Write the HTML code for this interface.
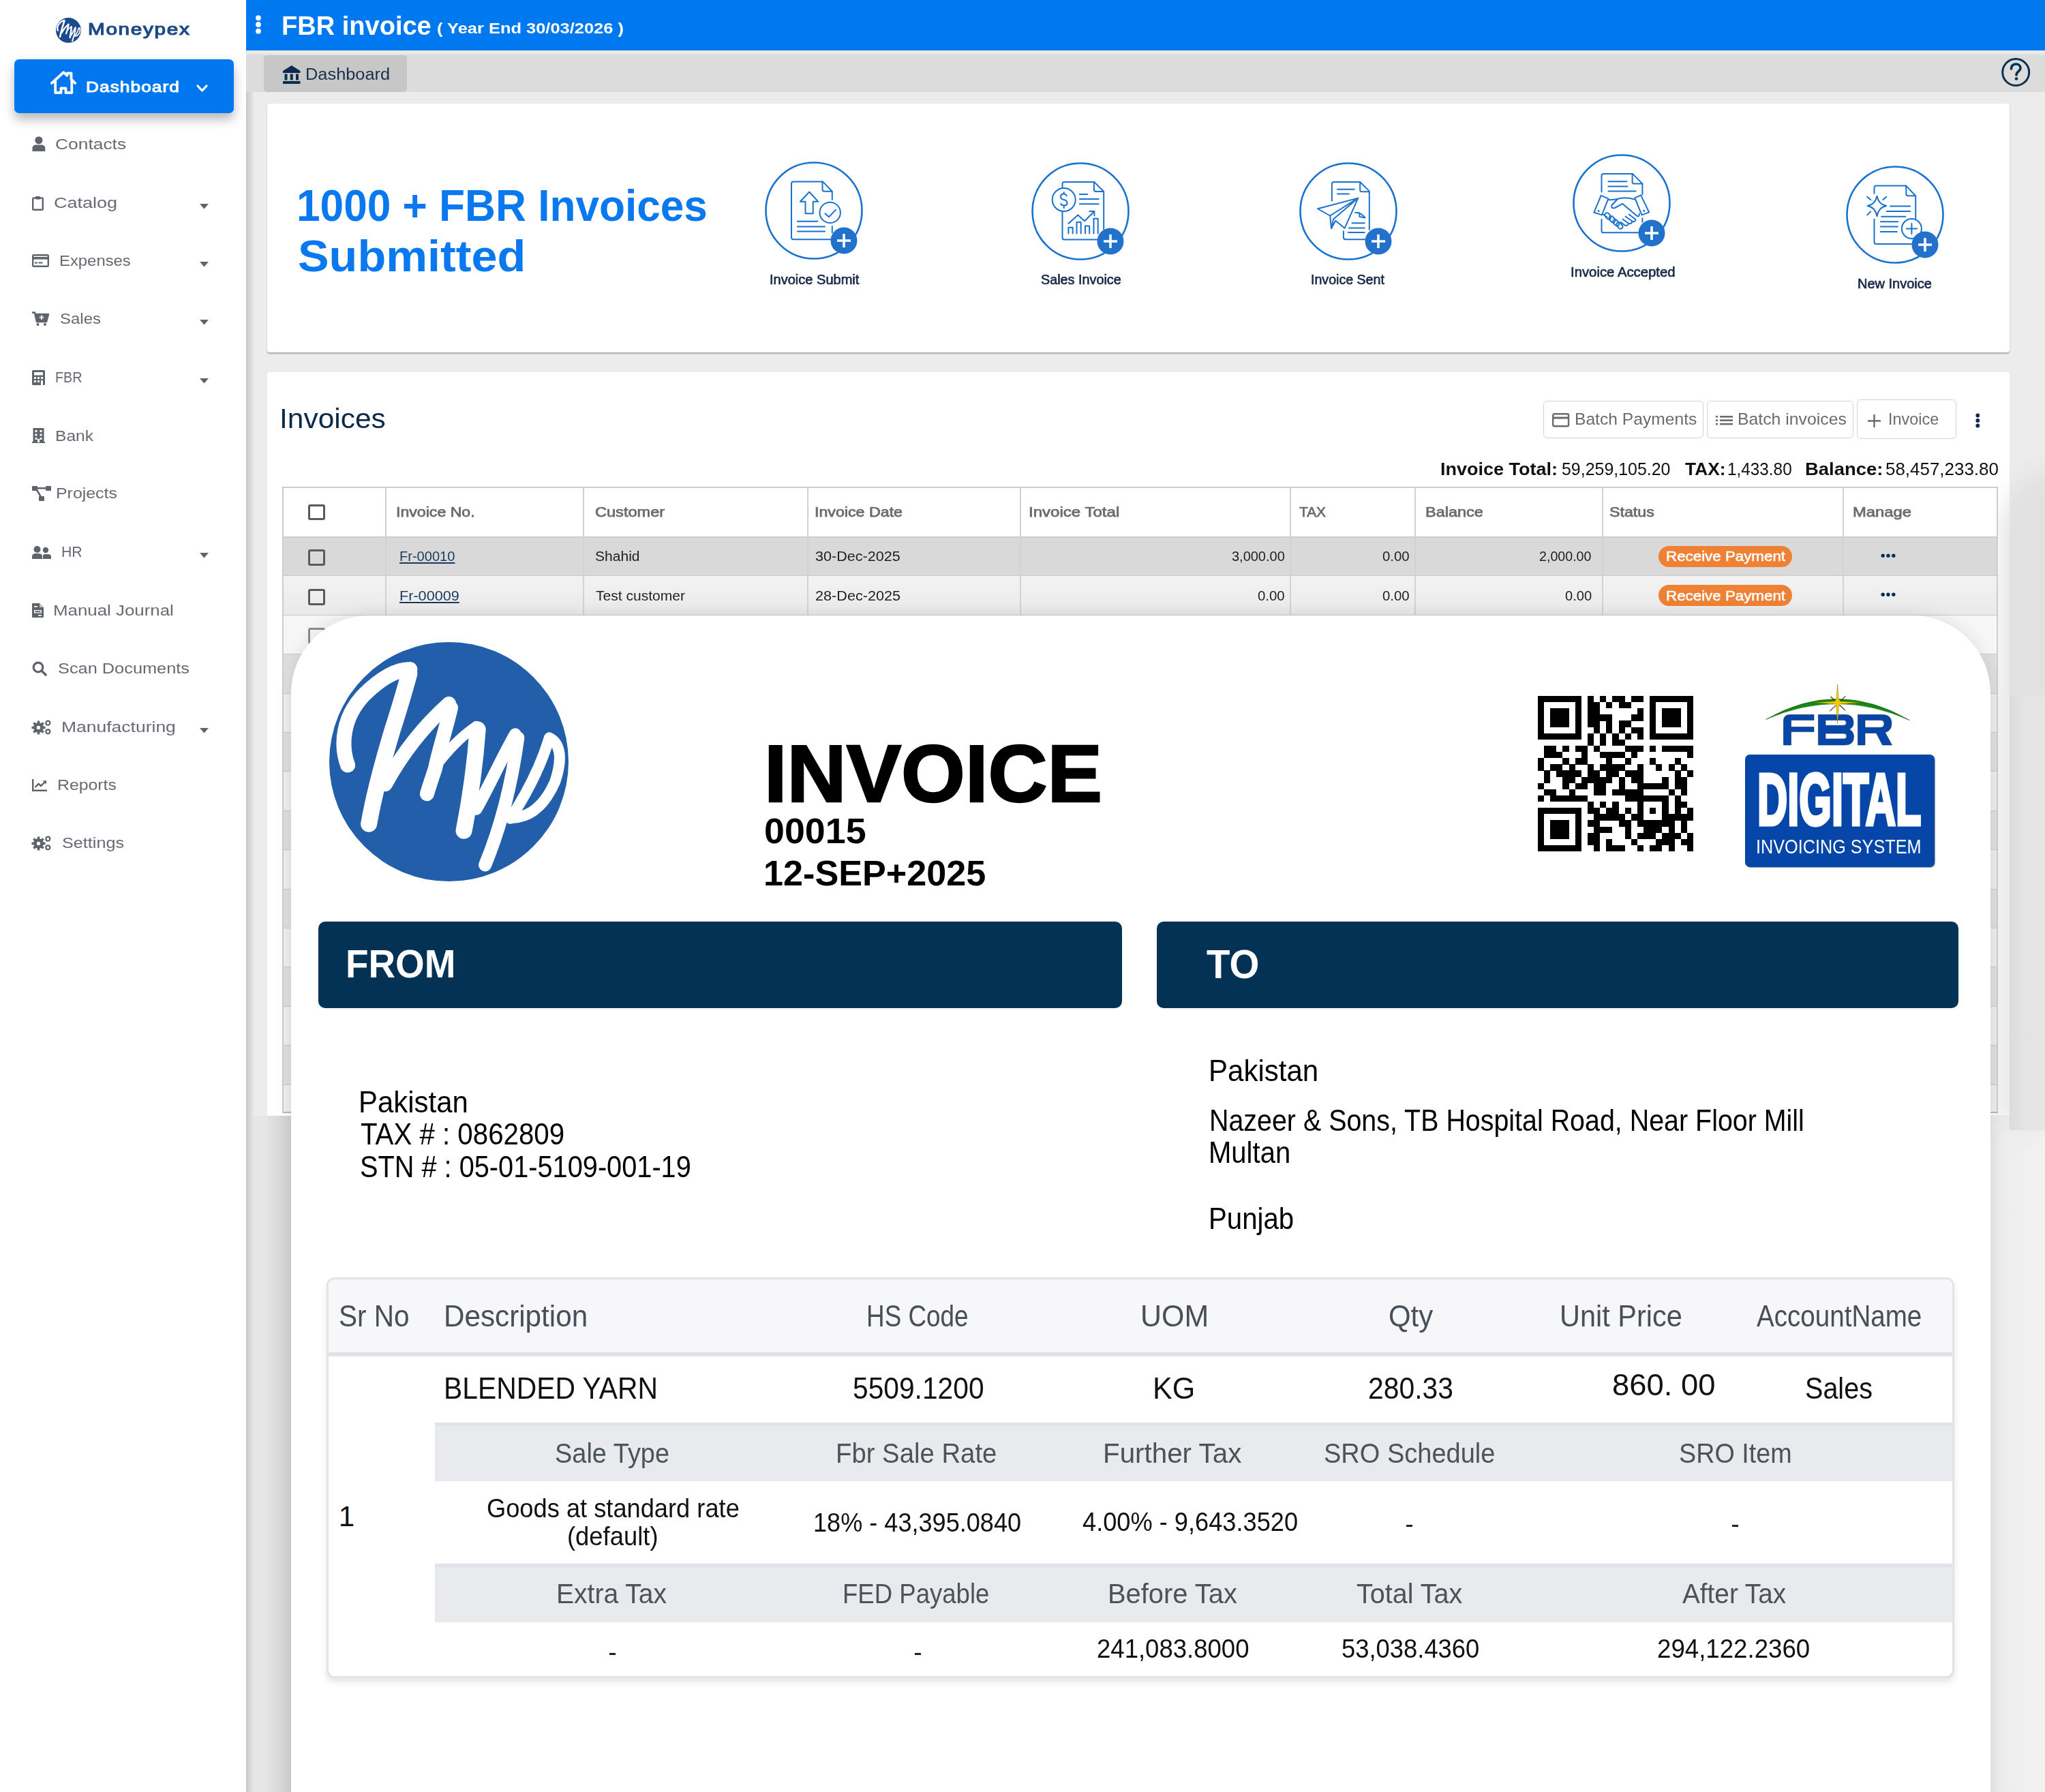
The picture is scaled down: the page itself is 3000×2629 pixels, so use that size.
<!DOCTYPE html><html><head><meta charset="utf-8"><style>
html,body{margin:0;padding:0;}
body{width:3000px;height:2629px;position:relative;overflow:hidden;background:#ececec;font-family:"Liberation Sans",sans-serif;}
.t{position:absolute;white-space:nowrap;transform-origin:0 0;}
.r{position:absolute;box-sizing:border-box;}
svg{position:absolute;overflow:visible;}
</style></head><body>
<div class="r" style="left:0px;top:0px;width:361px;height:2629px;background:#fff;"></div><div class="r" style="left:361px;top:0px;width:11px;height:2629px;background:linear-gradient(90deg,#c9c9c9,#e6e6e6);"></div><div class="r" style="left:361px;top:0px;width:2639px;height:74px;background:#0078ef;"></div><div class="r" style="left:361px;top:74px;width:2639px;height:6px;background:#e9e9e9;"></div><div class="r" style="left:361px;top:80px;width:2639px;height:55px;background:#dcdcdc;"></div><div class="r" style="left:387px;top:81px;width:210px;height:53.5px;background:#c7c7c7;border-radius:5px;"></div><div class="r" style="left:2938px;top:700px;width:102px;height:950px;background:#e1e1e1;border-radius:80px 0 0 0;filter:blur(18px);"></div><div class="r" style="left:2948px;top:1020px;width:52px;height:638px;background:linear-gradient(90deg,#dbdbdb,#e3e3e3 40%,#e6e6e6);"></div><div class="r" style="left:392px;top:152px;width:2556px;height:365px;background:#fff;border-radius:4px;box-shadow:0 1.5px 2px rgba(0,0,0,0.28);"></div><div class="r" style="left:392px;top:546px;width:2556px;height:1091px;background:#fff;border-radius:4px 4px 0 0;"></div><div class="r" style="left:2920px;top:1636px;width:80px;height:993px;background:linear-gradient(90deg,#ececec,#f2f2f2);"></div><div class="r" style="left:372px;top:1637px;width:55px;height:992px;background:linear-gradient(90deg,#e6e6e6 0%,#e6e6e6 36%,#e2e2e2 40%,#d2d2d2 100%);"></div><svg style="left:82.0px;top:26.0px" width="36.8" height="36.8" viewBox="0 0 350 350"><circle cx="175" cy="175" r="175" fill="#1c4a8f"/><path d="M27 180 C16 150 20 110 50 78 C70 58 95 40 118 40" stroke="#fff" fill="none" stroke-linecap="round" stroke-linejoin="round" stroke-width="22"/><path d="M117 46 C108 80 100 105 92 130 C80 170 66 220 58 266" stroke="#fff" fill="none" stroke-linecap="round" stroke-linejoin="round" stroke-width="24"/><path d="M82 208 C100 175 130 130 175 90" stroke="#fff" fill="none" stroke-linecap="round" stroke-linejoin="round" stroke-width="21"/><path d="M178 96 C170 130 160 160 155 185 C150 200 146 212 143 222" stroke="#fff" fill="none" stroke-linecap="round" stroke-linejoin="round" stroke-width="21"/><path d="M155 183 C172 160 190 140 215 123" stroke="#fff" fill="none" stroke-linecap="round" stroke-linejoin="round" stroke-width="15"/><path d="M217 128 C214 170 208 220 197 276" stroke="#fff" fill="none" stroke-linecap="round" stroke-linejoin="round" stroke-width="24"/><path d="M215 244 C232 215 252 170 272 135" stroke="#fff" fill="none" stroke-linecap="round" stroke-linejoin="round" stroke-width="18"/><path d="M276 140 C268 200 255 260 228 326" stroke="#fff" fill="none" stroke-linecap="round" stroke-linejoin="round" stroke-width="19"/><path d="M265 258 C290 220 310 180 322 140 C338 148 342 170 330 205 C318 232 300 255 270 257" stroke="#fff" fill="none" stroke-linecap="round" stroke-linejoin="round" stroke-width="16"/></svg><div class="t " style="left:129.1px;top:30.9px;font-size:24.71px;line-height:24.71px;font-weight:400;color:#1f4a88;transform:scaleX(1.2000);-webkit-text-stroke:1.2px #1f4a88;letter-spacing:1.42px;">Moneypex</div><div class="r" style="left:20.6px;top:86.6px;width:322.4px;height:79.0px;background:#0077ee;border-radius:7px;box-shadow:0 9px 16px rgba(0,0,0,0.28);"></div><svg style="left:74px;top:104px;" width="38" height="34" viewBox="0 0 38 34" preserveAspectRatio="none"><path d="M1.8 18 L19.3 2.2 L24.5 6.8 V3.5 H30.5 V12.3 L36.3 18 M7.2 13 V32 H15.5 V25.5 H22.5 V32 H31.3 V13" stroke="#fff" stroke-width="3.8" fill="none" stroke-linejoin="round" stroke-linecap="round"/></svg><div class="t " style="left:125.8px;top:117.0px;font-size:22.24px;line-height:22.24px;font-weight:400;color:#fff;transform:scaleX(1.1800);-webkit-text-stroke:1px #fff;letter-spacing:0.90px;">Dashboard</div><svg style="left:288px;top:124px;" width="17" height="11" viewBox="0 0 17 11" preserveAspectRatio="none"><path d="M2 2 L8.5 9 L15 2" stroke="#fff" stroke-width="3.2" fill="none" stroke-linecap="round" stroke-linejoin="round"/></svg><div class="t " style="left:81.3px;top:200.8px;font-size:22.24px;line-height:22.24px;font-weight:400;color:#656a73;transform:scaleX(1.1862);">Contacts</div><div class="t " style="left:78.6px;top:287.2px;font-size:22.24px;line-height:22.24px;font-weight:400;color:#656a73;transform:scaleX(1.2146);">Catalog</div><svg style="left:293px;top:298.5px;" width="13" height="7.5" viewBox="0 0 13 7.5" preserveAspectRatio="none"><path d="M0 0H13L6.5 7.5Z" fill="#5f636b"/></svg><div class="t " style="left:87.0px;top:372.2px;font-size:22.24px;line-height:22.24px;font-weight:400;color:#656a73;transform:scaleX(1.0731);">Expenses</div><svg style="left:293px;top:383.5px;" width="13" height="7.5" viewBox="0 0 13 7.5" preserveAspectRatio="none"><path d="M0 0H13L6.5 7.5Z" fill="#5f636b"/></svg><div class="t " style="left:87.9px;top:457.2px;font-size:22.24px;line-height:22.24px;font-weight:400;color:#656a73;transform:scaleX(1.0777);">Sales</div><svg style="left:293px;top:468.5px;" width="13" height="7.5" viewBox="0 0 13 7.5" preserveAspectRatio="none"><path d="M0 0H13L6.5 7.5Z" fill="#5f636b"/></svg><div class="t " style="left:81.4px;top:543.2px;font-size:22.24px;line-height:22.24px;font-weight:400;color:#656a73;transform:scaleX(0.8888);">FBR</div><svg style="left:293px;top:554.5px;" width="13" height="7.5" viewBox="0 0 13 7.5" preserveAspectRatio="none"><path d="M0 0H13L6.5 7.5Z" fill="#5f636b"/></svg><div class="t " style="left:81.0px;top:629.2px;font-size:22.24px;line-height:22.24px;font-weight:400;color:#656a73;transform:scaleX(1.1047);">Bank</div><div class="t " style="left:82.0px;top:713.2px;font-size:22.24px;line-height:22.24px;font-weight:400;color:#656a73;transform:scaleX(1.1197);">Projects</div><div class="t " style="left:90.3px;top:799.2px;font-size:22.24px;line-height:22.24px;font-weight:400;color:#656a73;transform:scaleX(0.9567);">HR</div><svg style="left:293px;top:810.5px;" width="13" height="7.5" viewBox="0 0 13 7.5" preserveAspectRatio="none"><path d="M0 0H13L6.5 7.5Z" fill="#5f636b"/></svg><div class="t " style="left:77.9px;top:885.2px;font-size:22.24px;line-height:22.24px;font-weight:400;color:#656a73;transform:scaleX(1.1630);">Manual Journal</div><div class="t " style="left:84.9px;top:970.2px;font-size:22.24px;line-height:22.24px;font-weight:400;color:#656a73;transform:scaleX(1.1400);">Scan Documents</div><div class="t " style="left:89.8px;top:1056.2px;font-size:22.24px;line-height:22.24px;font-weight:400;color:#656a73;transform:scaleX(1.1912);">Manufacturing</div><svg style="left:293px;top:1067.5px;" width="13" height="7.5" viewBox="0 0 13 7.5" preserveAspectRatio="none"><path d="M0 0H13L6.5 7.5Z" fill="#5f636b"/></svg><div class="t " style="left:84.0px;top:1141.2px;font-size:22.24px;line-height:22.24px;font-weight:400;color:#656a73;transform:scaleX(1.1165);">Reports</div><div class="t " style="left:90.9px;top:1226.2px;font-size:22.24px;line-height:22.24px;font-weight:400;color:#656a73;transform:scaleX(1.1331);">Settings</div><svg style="left:46.6px;top:200px;" width="19.800000000000004" height="22" viewBox="0 0 19.800000000000004 22" preserveAspectRatio="none"><circle cx="9.9" cy="5.8" r="5.6" fill="#5f636b"/><path d="M0.5 22 V17.5 C0.5 14 3 12.5 6 12.5 H13.8 C16.8 12.5 19.3 14 19.3 17.5 V22 Z" fill="#5f636b"/></svg><svg style="left:47px;top:287px;" width="17" height="22" viewBox="0 0 17 22" preserveAspectRatio="none"><rect x="1.2" y="3.5" width="14.6" height="17.3" rx="1.5" stroke="#5f636b" stroke-width="2.4" fill="none"/><rect x="5" y="1" width="7" height="4.5" rx="1" fill="#5f636b"/></svg><svg style="left:47px;top:373px;" width="25" height="19" viewBox="0 0 25 19" preserveAspectRatio="none"><rect x="1.2" y="1.2" width="22.6" height="16.6" rx="1.5" stroke="#5f636b" stroke-width="2.4" fill="none"/><rect x="1" y="4" width="23" height="3.5" fill="#5f636b"/><rect x="4" y="11.5" width="4" height="2" fill="#5f636b"/><rect x="9.5" y="11.5" width="6" height="2" fill="#5f636b"/></svg><svg style="left:47px;top:457px;" width="25" height="21" viewBox="0 0 25 21" preserveAspectRatio="none"><path d="M0 1.5 H4 L7 15 H21 L24 4 H5" stroke="#5f636b" stroke-width="2.6" fill="#5f636b" stroke-linejoin="round"/><circle cx="8.5" cy="19" r="2" fill="#5f636b"/><circle cx="19" cy="19" r="2" fill="#5f636b"/><path d="M14 5.5 V12 M10.8 8.7 H17.2" stroke="#fff" stroke-width="1.8"/></svg><svg style="left:47px;top:543px;" width="19" height="22" viewBox="0 0 19 22" preserveAspectRatio="none"><rect x="0" y="0" width="19" height="22" rx="1.5" fill="#5f636b"/><rect x="3" y="3" width="13" height="4.5" fill="#fff"/><g fill="#fff"><rect x="3" y="10" width="3" height="3"/><rect x="8" y="10" width="3" height="3"/><rect x="13" y="10" width="3" height="3"/><rect x="3" y="15" width="3" height="3"/><rect x="8" y="15" width="3" height="3"/><rect x="13" y="15" width="3" height="8"/></g></svg><svg style="left:47px;top:628px;" width="19" height="22" viewBox="0 0 19 22" preserveAspectRatio="none"><rect x="1.5" y="0" width="16" height="21" fill="#5f636b"/><rect x="0" y="20" width="19" height="2" fill="#5f636b"/><g fill="#fff"><rect x="4.5" y="3" width="3" height="3"/><rect x="11.5" y="3" width="3" height="3"/><rect x="4.5" y="8.5" width="3" height="3"/><rect x="11.5" y="8.5" width="3" height="3"/><rect x="4.5" y="14" width="3" height="3"/><rect x="11.5" y="14" width="3" height="3"/><rect x="8" y="16" width="3" height="5"/></g></svg><svg style="left:47px;top:713px;" width="28" height="22" viewBox="0 0 28 22" preserveAspectRatio="none"><g fill="#5f636b"><rect x="0" y="0" width="8" height="7" rx="1"/><rect x="20" y="0" width="8" height="7" rx="1"/><rect x="10" y="15" width="8" height="7" rx="1"/><rect x="6" y="2" width="15" height="2.5"/></g><path d="M6 4 L13 16" stroke="#5f636b" stroke-width="2.5"/></svg><svg style="left:47px;top:801px;" width="28" height="19" viewBox="0 0 28 19" preserveAspectRatio="none"><g fill="#5f636b"><circle cx="7.5" cy="5" r="5"/><circle cx="20" cy="6" r="4.2"/><path d="M0 19 V15.5 C0 12.5 2.5 11 5 11 H10 C13 11 15 12.5 15 15.5 V19Z"/><path d="M16 19 V15 C16 13 17 12 19 12 H23.5 C26.5 12 28 13.5 28 16 V19Z"/></g></svg><svg style="left:47px;top:885px;" width="17" height="21" viewBox="0 0 17 21" preserveAspectRatio="none"><path d="M0 1 C0 0.4 0.4 0 1 0 H11 L17 6 V20 C17 20.6 16.6 21 16 21 H1 C0.4 21 0 20.6 0 20Z" fill="#5f636b"/><path d="M11 0 V6 H17" fill="#fff" opacity="0.6"/><rect x="3" y="10" width="11" height="4.5" fill="#fff"/><rect x="4.5" y="11.2" width="8" height="2.1" fill="#5f636b"/><rect x="3" y="4" width="5" height="1.6" fill="#fff"/><rect x="9" y="17" width="5" height="1.6" fill="#fff"/></svg><svg style="left:47px;top:970px;" width="22" height="21" viewBox="0 0 22 21" preserveAspectRatio="none"><circle cx="9" cy="9" r="6.8" stroke="#5f636b" stroke-width="3.2" fill="none"/><path d="M14 14 L20 20" stroke="#5f636b" stroke-width="3.6" stroke-linecap="round"/></svg><svg style="left:47px;top:1056px;" width="28" height="22" viewBox="0 0 28 22" preserveAspectRatio="none"><g fill="#5f636b"><circle cx="9.5" cy="11.5" r="7.3"/><rect x="7.7" y="1.5" width="3.6" height="4" transform="rotate(0 9.5 11.5)"/><rect x="7.7" y="1.5" width="3.6" height="4" transform="rotate(45 9.5 11.5)"/><rect x="7.7" y="1.5" width="3.6" height="4" transform="rotate(90 9.5 11.5)"/><rect x="7.7" y="1.5" width="3.6" height="4" transform="rotate(135 9.5 11.5)"/><rect x="7.7" y="1.5" width="3.6" height="4" transform="rotate(180 9.5 11.5)"/><rect x="7.7" y="1.5" width="3.6" height="4" transform="rotate(225 9.5 11.5)"/><rect x="7.7" y="1.5" width="3.6" height="4" transform="rotate(270 9.5 11.5)"/><rect x="7.7" y="1.5" width="3.6" height="4" transform="rotate(315 9.5 11.5)"/></g><circle cx="9.5" cy="11.5" r="2.7" fill="#fff"/><circle cx="23.3" cy="4.7" r="3" stroke="#5f636b" stroke-width="2.2" fill="none"/><circle cx="23.3" cy="17.3" r="3" stroke="#5f636b" stroke-width="2.2" fill="none"/></svg><svg style="left:47px;top:1143px;" width="22" height="18" viewBox="0 0 22 18" preserveAspectRatio="none"><path d="M1.2 0 V16.8 H22" stroke="#5f636b" stroke-width="2.4" fill="none"/><path d="M4.5 12 L9.5 7 L13 10 L19.5 3.5" stroke="#5f636b" stroke-width="2.4" fill="none"/><path d="M15.5 2.2 H21 V7.7Z" fill="#5f636b"/></svg><svg style="left:47px;top:1226px;" width="28" height="22" viewBox="0 0 28 22" preserveAspectRatio="none"><g fill="#5f636b"><circle cx="9.5" cy="11.5" r="7.3"/><rect x="7.7" y="1.5" width="3.6" height="4" transform="rotate(0 9.5 11.5)"/><rect x="7.7" y="1.5" width="3.6" height="4" transform="rotate(45 9.5 11.5)"/><rect x="7.7" y="1.5" width="3.6" height="4" transform="rotate(90 9.5 11.5)"/><rect x="7.7" y="1.5" width="3.6" height="4" transform="rotate(135 9.5 11.5)"/><rect x="7.7" y="1.5" width="3.6" height="4" transform="rotate(180 9.5 11.5)"/><rect x="7.7" y="1.5" width="3.6" height="4" transform="rotate(225 9.5 11.5)"/><rect x="7.7" y="1.5" width="3.6" height="4" transform="rotate(270 9.5 11.5)"/><rect x="7.7" y="1.5" width="3.6" height="4" transform="rotate(315 9.5 11.5)"/></g><circle cx="9.5" cy="11.5" r="2.7" fill="#fff"/><circle cx="23.3" cy="4.7" r="3" stroke="#5f636b" stroke-width="2.2" fill="none"/><circle cx="23.3" cy="17.3" r="3" stroke="#5f636b" stroke-width="2.2" fill="none"/></svg><svg style="left:374px;top:22px;" width="10" height="28" viewBox="0 0 10 28" preserveAspectRatio="none"><circle cx="5" cy="4.3" r="3.9" fill="#fff"/><circle cx="5" cy="14" r="3.9" fill="#fff"/><circle cx="5" cy="23.7" r="3.9" fill="#fff"/></svg><div class="t " style="left:412.5px;top:17.8px;font-size:39.24px;line-height:39.24px;font-weight:700;color:#fff;transform:scaleX(0.9693);">FBR invoice</div><div class="t " style="left:640.7px;top:31.0px;font-size:21.80px;line-height:21.80px;font-weight:700;color:#fff;transform:scaleX(1.1675);">( Year End 30/03/2026 )</div><svg style="left:414.5px;top:96px;" width="25.5" height="27" viewBox="0 0 25.5 27" preserveAspectRatio="none"><g fill="#0d2b4e"><path d="M0 8 L12.75 0 L25.5 8Z"/><rect x="0" y="8" width="25.5" height="3"/><rect x="2.5" y="12.5" width="4" height="9"/><rect x="10.75" y="12.5" width="4" height="9"/><rect x="19" y="12.5" width="4" height="9"/><rect x="0" y="23" width="25.5" height="4"/></g></svg><div class="t " style="left:448.4px;top:96.7px;font-size:23.98px;line-height:23.98px;font-weight:400;color:#1b2e4a;transform:scaleX(1.0587);">Dashboard</div><svg style="left:2935.6px;top:85px;" width="42.40000000000009" height="42" viewBox="0 0 42.40000000000009 42" preserveAspectRatio="none"><circle cx="21.2" cy="21" r="19.5" stroke="#08304f" stroke-width="3" fill="none"/><path d="M14.5 16 C14.5 11 18 9 21.5 9 C25.5 9 28 11.5 28 15 C28 19.5 22 20 22 25" stroke="#08304f" stroke-width="3.6" fill="none" stroke-linecap="round"/><circle cx="22" cy="30.5" r="2.3" fill="#08304f"/></svg><div class="r" style="left:2938px;top:700px;width:102px;height:950px;background:#e1e1e1;border-radius:80px 0 0 0;filter:blur(18px);"></div><div class="r" style="left:2948px;top:1020px;width:52px;height:638px;background:linear-gradient(90deg,#dbdbdb,#e3e3e3 40%,#e6e6e6);"></div><div class="t " style="left:435.1px;top:270.9px;font-size:63.95px;line-height:63.95px;font-weight:700;color:#0a78ef;transform:scaleX(0.9722);">1000 + FBR Invoices</div><div class="t " style="left:437.0px;top:344.5px;font-size:63.95px;line-height:63.95px;font-weight:700;color:#0a78ef;transform:scaleX(1.0698);">Submitted</div><svg style="left:1093.9px;top:209.10000000000002px" width="200" height="200" viewBox="-100 -100 200 200"><circle cx="0" cy="0" r="70.5" stroke="#1a72d0" stroke-width="2.6" fill="none"/><path d="M26.8 -16.3 V-28.3 L12.9 -42.6 H-30 Q-33 -42.6 -33 -39.6 V39.2 Q-33 42.2 -30 42.2 H25" stroke="#1a72d0" stroke-width="2" fill="none" stroke-linecap="round" stroke-linejoin="round"/><path d="M12.5 -42.6 V-31.3 Q12.5 -28.3 15.5 -28.3 H26" stroke="#1a72d0" stroke-width="2" fill="none" stroke-linecap="round" stroke-linejoin="round"/><path d="M26.8 23 V32.4" stroke="#1a72d0" stroke-width="2" fill="none" stroke-linecap="round" stroke-linejoin="round"/><path d="M-6.7 -27.5 L-20.1 -13.2 H-12.5 V4.2 H-1.3 V-13.2 H6.25 Z" stroke="#1a72d0" stroke-width="2" fill="none" stroke-linecap="round" stroke-linejoin="round"/><circle cx="23.7" cy="2.9" r="15.2" stroke="#1a72d0" stroke-width="2" fill="none" stroke-linecap="round" stroke-linejoin="round"/><path d="M16.5 4.2 L21.9 9.2 L32.1 -1.1" stroke="#1a72d0" stroke-width="2" fill="none" stroke-linecap="round" stroke-linejoin="round" stroke-width="2.8"/><path d="M-24.1 15.8 H5.4 M-24.1 23.4 H16.1 M-24.1 30.6 H16.1" stroke="#1a72d0" stroke-width="2" fill="none" stroke-linecap="round" stroke-linejoin="round"/><circle cx="44" cy="44" r="19.5" fill="#2272cc"/><path d="M34 44 H54 M44 34 V54" stroke="#fff" stroke-width="3.6"/></svg><svg style="left:1485.1px;top:209.8px" width="200" height="200" viewBox="-100 -100 200 200"><circle cx="0" cy="0" r="70.5" stroke="#1a72d0" stroke-width="2.6" fill="none"/><path d="M-26.5 -33.9 V-39.9 Q-26.5 -42.9 -23.5 -42.9 H20.4 L34.2 -29 V26.3 M-26.5 0 V38.5 Q-26.5 41.5 -23.5 41.5 H25.3" stroke="#1a72d0" stroke-width="2" fill="none" stroke-linecap="round" stroke-linejoin="round"/><path d="M19.9 -42.9 V-32 Q19.9 -29 22.9 -29 H33" stroke="#1a72d0" stroke-width="2" fill="none" stroke-linecap="round" stroke-linejoin="round"/><circle cx="-24.3" cy="-17" r="17" stroke="#1a72d0" stroke-width="2" fill="none" stroke-linecap="round" stroke-linejoin="round"/><path d="M-20.2 -22.6 Q-21.5 -25.5 -24.5 -25.5 Q-29 -25.5 -29 -21.5 Q-29 -18 -24.3 -17 Q-19.5 -16 -19.5 -12 Q-19.5 -8.5 -24 -8.5 Q-27.5 -8.5 -28.6 -11.2 M-24.3 -28.1 V-25.5 M-24.3 -8.5 V-5" stroke="#1a72d0" stroke-width="2" fill="none" stroke-linecap="round" stroke-linejoin="round"/><path d="M-1.1 -25 H10.1 M-1.1 -17.9 H26.6 M-1.1 -10.7 H26.6" stroke="#1a72d0" stroke-width="2" fill="none" stroke-linecap="round" stroke-linejoin="round"/><path d="M-17.6 17.9 L-3.75 5.4 L6.1 14.3 L20.4 0 M13.3 0 H20.4 V6.25" stroke="#1a72d0" stroke-width="2" fill="none" stroke-linecap="round" stroke-linejoin="round"/><path d="M-17.6 32.6 V23.7 H-11.3 V32.6 M-5.5 32.6 V16.1 H0.7 V32.6 M7 32.6 V21.4 H13.2 V32.6 M19.5 32.6 V10.7 H25.7 V32.6" stroke="#1a72d0" stroke-width="2" fill="none" stroke-linecap="round" stroke-linejoin="round"/><circle cx="44" cy="44" r="19.5" fill="#2272cc"/><path d="M34 44 H54 M44 34 V54" stroke="#fff" stroke-width="3.6"/></svg><svg style="left:1877.7px;top:209.7px" width="200" height="200" viewBox="-100 -100 200 200"><circle cx="0" cy="0" r="70.5" stroke="#1a72d0" stroke-width="2.6" fill="none"/><path d="M-24.1 -15.4 V-40 Q-24.1 -43 -21.1 -43 H17.2 L30.8 -29.6 V27" stroke="#1a72d0" stroke-width="2" fill="none" stroke-linecap="round" stroke-linejoin="round"/><path d="M17.2 -43 V-31.3 Q17.2 -28.8 20 -28.8 H30" stroke="#1a72d0" stroke-width="2" fill="none" stroke-linecap="round" stroke-linejoin="round"/><path d="M-16 -32.3 H8.9 M-16 -25.6 H0.9" stroke="#1a72d0" stroke-width="2" fill="none" stroke-linecap="round" stroke-linejoin="round"/><path d="M-45 -3.75 L14.3 -19.4 L-5.4 24.8 L-18.75 13.7 L-25 25.3 L-26.8 6.5 Z M-26.8 6.5 L14.3 -19.4 M-21.9 11.4 L14.3 -19.4 M-21.9 11.4 L-25 25.3" stroke="#1a72d0" stroke-width="2" fill="none" stroke-linecap="round" stroke-linejoin="round"/><path d="M-7.1 29.3 V38.3 Q-7.1 41.3 -4.1 41.3 H26" stroke="#1a72d0" stroke-width="2" fill="none" stroke-linecap="round" stroke-linejoin="round"/><path d="M10.3 2.1 H15.2 Q16.5 3 16.5 7.9 L24.6 9.6 Q21 4.5 15.2 2.1" stroke="#1a72d0" stroke-width="2" fill="none" stroke-linecap="round" stroke-linejoin="round"/><path d="M5.4 17.2 H23.7 M0.9 24.4 H23.7 M0 31.1 H23.7" stroke="#1a72d0" stroke-width="2" fill="none" stroke-linecap="round" stroke-linejoin="round"/><circle cx="44" cy="44" r="19.5" fill="#2272cc"/><path d="M34 44 H54 M44 34 V54" stroke="#fff" stroke-width="3.6"/></svg><svg style="left:2279px;top:198.39999999999998px" width="200" height="200" viewBox="-100 -100 200 200"><circle cx="0" cy="0" r="70.5" stroke="#1a72d0" stroke-width="2.6" fill="none"/><path d="M-29.5 -16.5 V-40 Q-29.5 -42.9 -26.6 -42.9 H16.1 L30.4 -28.6 V-12.5 M-29.5 24.1 V40.4 Q-29.5 43.3 -26.6 43.3 H26 M30.4 22.3 V27.7" stroke="#1a72d0" stroke-width="2" fill="none" stroke-linecap="round" stroke-linejoin="round"/><path d="M15.6 -42.9 V-31 Q15.6 -28.6 18 -28.6 H29.5" stroke="#1a72d0" stroke-width="2" fill="none" stroke-linecap="round" stroke-linejoin="round"/><path d="M-19.6 -31.7 H7.6 M-19.6 -24.6 H8.5 M-19.6 -17.4 H20.5" stroke="#1a72d0" stroke-width="2" fill="none" stroke-linecap="round" stroke-linejoin="round"/><path d="M-30.4 -11.2 L-19.6 -6.7 L-29 17.4 L-40.6 13.8 Z M19.2 -7.6 L28.1 -11.6 L40.2 13.4 L29.5 17.4 Z" stroke="#1a72d0" stroke-width="2" fill="none" stroke-linecap="round" stroke-linejoin="round"/><path d="M-19.6 -4.9 Q-10 -4.5 -1 -7.2 Q6 -9 19.2 -5.4" stroke="#1a72d0" stroke-width="2" fill="none" stroke-linecap="round" stroke-linejoin="round"/><path d="M-6.5 -5.5 L-14.5 3 Q-16 8.5 -10 7 L1.3 0.9 L22 18.5 Q25.5 21.5 25.9 15.6" stroke="#1a72d0" stroke-width="2" fill="none" stroke-linecap="round" stroke-linejoin="round"/><path d="M-27.2 16.5 L-21.5 20.5 M10.7 16.5 L20.5 24 Q20 28 16 27 L5.5 19.5 M15.5 26.5 Q14.5 31 10.5 30 L1.5 23.5 M10 30 Q8.5 34 4.5 32.5 L-1 28" stroke="#1a72d0" stroke-width="2" fill="none" stroke-linecap="round" stroke-linejoin="round"/><rect x="-23.0" y="13.399999999999999" width="6.4" height="10.5" rx="3.2" transform="rotate(-40 -19.6 19.4)" stroke="#1a72d0" stroke-width="2" fill="none" stroke-linecap="round" stroke-linejoin="round" fill="#fff"/><rect x="-16.8" y="18.2" width="6.4" height="10.5" rx="3.2" transform="rotate(-40 -13.4 24.2)" stroke="#1a72d0" stroke-width="2" fill="none" stroke-linecap="round" stroke-linejoin="round" fill="#fff"/><rect x="-11.0" y="23.2" width="6.4" height="10.5" rx="3.2" transform="rotate(-40 -7.6 29.2)" stroke="#1a72d0" stroke-width="2" fill="none" stroke-linecap="round" stroke-linejoin="round" fill="#fff"/><rect x="-5.8" y="27.4" width="6.4" height="10.5" rx="3.2" transform="rotate(-40 -2.4 33.4)" stroke="#1a72d0" stroke-width="2" fill="none" stroke-linecap="round" stroke-linejoin="round" fill="#fff"/><circle cx="-33.9" cy="11.6" r="1.5" fill="#1a72d0"/><circle cx="32.6" cy="11.2" r="1.5" fill="#1a72d0"/><circle cx="44" cy="44" r="19.5" fill="#2272cc"/><path d="M34 44 H54 M44 34 V54" stroke="#fff" stroke-width="3.6"/></svg><svg style="left:2679.7px;top:215.25px" width="200" height="200" viewBox="-100 -100 200 200"><circle cx="0" cy="0" r="70.5" stroke="#1a72d0" stroke-width="2.6" fill="none"/><path d="M-30.5 -31.25 V-39.4 Q-30.5 -42.4 -27.5 -42.4 H16.3 L30.2 -27.7 V5.8 M-30.5 6.7 V39.9 Q-30.5 42.9 -27.5 42.9 H26" stroke="#1a72d0" stroke-width="2" fill="none" stroke-linecap="round" stroke-linejoin="round"/><path d="M16.3 -42.4 V-30.7 Q16.3 -27.7 19.3 -27.7 H29.5" stroke="#1a72d0" stroke-width="2" fill="none" stroke-linecap="round" stroke-linejoin="round"/><path d="M-26.5 -27.2 Q-24 -15 -12.7 -12.9 Q-24 -10.8 -26.5 2.2 Q-29 -10.8 -40.4 -12.9 Q-29 -15 -26.5 -27.2 Z" stroke="#1a72d0" stroke-width="2" fill="none" stroke-linecap="round" stroke-linejoin="round"/><path d="M-40.8 -26.3 L-35.9 -21.9 M-12.7 -26.3 L-17.7 -21.9 M-40.8 0.4 L-35.9 -4.5" stroke="#1a72d0" stroke-width="2" fill="none" stroke-linecap="round" stroke-linejoin="round"/><path d="M-6.9 -12.5 H22.1 M-12.2 -4.9 H22.1 M-19.8 2.7 H15.4 M-21.2 10.3 H4.3 M-21.2 17.4 H3.8 M-21.2 25 H2.9" stroke="#1a72d0" stroke-width="2" fill="none" stroke-linecap="round" stroke-linejoin="round"/><circle cx="24.4" cy="20.5" r="14.5" stroke="#1a72d0" stroke-width="2" fill="none" stroke-linecap="round" stroke-linejoin="round"/><path d="M16.8 20.5 H32 M24.4 13.1 V27.9" stroke="#1a72d0" stroke-width="2" fill="none" stroke-linecap="round" stroke-linejoin="round"/><circle cx="44" cy="44" r="19.5" fill="#2272cc"/><path d="M34 44 H54 M44 34 V54" stroke="#fff" stroke-width="3.6"/></svg><div class="t " style="left:1128.7px;top:399.9px;font-size:20.64px;line-height:20.64px;font-weight:400;color:#1a2b48;transform:scaleX(0.9712);-webkit-text-stroke:0.7px #1a2b48;">Invoice Submit</div><div class="t " style="left:1526.6px;top:400.2px;font-size:20.64px;line-height:20.64px;font-weight:400;color:#1a2b48;transform:scaleX(0.9592);-webkit-text-stroke:0.7px #1a2b48;">Sales Invoice</div><div class="t " style="left:1922.7px;top:400.2px;font-size:20.64px;line-height:20.64px;font-weight:400;color:#1a2b48;transform:scaleX(0.9502);-webkit-text-stroke:0.7px #1a2b48;">Invoice Sent</div><div class="t " style="left:2303.6px;top:389.1px;font-size:20.64px;line-height:20.64px;font-weight:400;color:#1a2b48;transform:scaleX(0.9848);-webkit-text-stroke:0.7px #1a2b48;">Invoice Accepted</div><div class="t " style="left:2725.4px;top:406.1px;font-size:20.64px;line-height:20.64px;font-weight:400;color:#1a2b48;transform:scaleX(0.9697);-webkit-text-stroke:0.7px #1a2b48;">New Invoice</div><div class="t " style="left:410.1px;top:593.5px;font-size:40.70px;line-height:40.70px;font-weight:400;color:#0b2a4a;transform:scaleX(1.0439);">Invoices</div><div class="r" style="left:2264.4px;top:588px;width:234.5999999999999px;height:54.60000000000002px;border:1.6px solid #d4d4d4;border-radius:6px;background:#fff;"></div><div class="r" style="left:2504px;top:588px;width:215px;height:54.60000000000002px;border:1.6px solid #d4d4d4;border-radius:6px;background:#fff;"></div><div class="r" style="left:2724px;top:586px;width:145.69999999999982px;height:57.60000000000002px;border:1.6px solid #d4d4d4;border-radius:6px;background:#fff;"></div><svg style="left:2276.7px;top:606px;" width="25.300000000000182" height="20.5" viewBox="0 0 25.300000000000182 20.5" preserveAspectRatio="none"><rect x="1.2" y="1.2" width="22.9" height="18.1" rx="2" stroke="#6b6b6b" stroke-width="2.4" fill="none"/><rect x="1" y="5.5" width="23" height="3" fill="#6b6b6b"/></svg><div class="t " style="left:2309.6px;top:603.3px;font-size:24.13px;line-height:24.13px;font-weight:400;color:#6b6b6b;transform:scaleX(1.0206);">Batch Payments</div><svg style="left:2517px;top:610.4px;" width="25" height="13.600000000000023" viewBox="0 0 25 13.600000000000023" preserveAspectRatio="none"><g fill="#6b6b6b"><rect x="0" y="0" width="3" height="2.6"/><rect x="0" y="5.4" width="3" height="2.6"/><rect x="0" y="10.8" width="3" height="2.6"/><rect x="6" y="0" width="19" height="2.6"/><rect x="6" y="5.4" width="19" height="2.6"/><rect x="6" y="10.8" width="19" height="2.6"/></g></svg><div class="t " style="left:2549.0px;top:603.3px;font-size:24.13px;line-height:24.13px;font-weight:400;color:#6b6b6b;transform:scaleX(1.0279);">Batch invoices</div><svg style="left:2740px;top:608px;" width="19" height="19" viewBox="0 0 19 19" preserveAspectRatio="none"><path d="M9.5 0 V19 M0 9.5 H19" stroke="#6b6b6b" stroke-width="2.4"/></svg><div class="t " style="left:2769.8px;top:603.3px;font-size:24.13px;line-height:24.13px;font-weight:400;color:#6b6b6b;transform:scaleX(0.9705);">Invoice</div><svg style="left:2897px;top:605px;" width="9" height="24" viewBox="0 0 9 24" preserveAspectRatio="none"><circle cx="4.3" cy="4.5" r="2.9" fill="#0d2b4e"/><circle cx="4.3" cy="12" r="2.9" fill="#0d2b4e"/><circle cx="4.3" cy="19.5" r="2.9" fill="#0d2b4e"/></svg><div class="t " style="left:2113.2px;top:676.0px;font-size:25.29px;line-height:25.29px;font-weight:700;color:#111;transform:scaleX(1.0681);">Invoice Total:</div><div class="t " style="left:2290.5px;top:676.0px;font-size:25.29px;line-height:25.29px;font-weight:400;color:#111;transform:scaleX(0.9860);">59,259,105.20</div><div class="t " style="left:2471.7px;top:676.0px;font-size:25.29px;line-height:25.29px;font-weight:700;color:#111;transform:scaleX(1.0418);">TAX:</div><div class="t " style="left:2533.8px;top:676.0px;font-size:25.29px;line-height:25.29px;font-weight:400;color:#111;transform:scaleX(0.9621);">1,433.80</div><div class="t " style="left:2647.7px;top:676.0px;font-size:25.29px;line-height:25.29px;font-weight:700;color:#111;transform:scaleX(1.0860);">Balance:</div><div class="t " style="left:2765.8px;top:676.0px;font-size:25.29px;line-height:25.29px;font-weight:400;color:#111;transform:scaleX(1.0261);">58,457,233.80</div><div class="r" style="left:414px;top:788px;width:2517px;height:57.39999999999998px;background:#d9d9d9;"></div><div class="r" style="left:414px;top:844.4px;width:2517px;height:2.0px;background:#c9c9c9;"></div><div class="r" style="left:414px;top:845.4px;width:2517px;height:57.39999999999998px;background:linear-gradient(180deg,#f3f3f3,#e9e9e9);"></div><div class="r" style="left:414px;top:901.8px;width:2517px;height:2.0px;background:#c9c9c9;"></div><div class="r" style="left:414px;top:902.8px;width:2517px;height:57.39999999999998px;background:#f6f6f6;"></div><div class="r" style="left:414px;top:959.1999999999999px;width:2517px;height:2.0px;background:#c9c9c9;"></div><div class="r" style="left:414px;top:960.1999999999999px;width:2517px;height:57.39999999999998px;background:#dfdfdf;"></div><div class="r" style="left:414px;top:1016.5999999999999px;width:2517px;height:2.0px;background:#c9c9c9;"></div><div class="r" style="left:414px;top:1017.5999999999999px;width:2517px;height:57.40000000000009px;background:#eeeeee;"></div><div class="r" style="left:414px;top:1074.0px;width:2517px;height:2.0px;background:#c9c9c9;"></div><div class="r" style="left:414px;top:1075.0px;width:2517px;height:57.40000000000009px;background:#dfdfdf;"></div><div class="r" style="left:414px;top:1131.4px;width:2517px;height:2.0px;background:#c9c9c9;"></div><div class="r" style="left:414px;top:1132.4px;width:2517px;height:57.40000000000009px;background:#eeeeee;"></div><div class="r" style="left:414px;top:1188.8000000000002px;width:2517px;height:2.0px;background:#c9c9c9;"></div><div class="r" style="left:414px;top:1189.8000000000002px;width:2517px;height:57.40000000000009px;background:#dfdfdf;"></div><div class="r" style="left:414px;top:1246.2000000000003px;width:2517px;height:2.0px;background:#c9c9c9;"></div><div class="r" style="left:414px;top:1247.2000000000003px;width:2517px;height:57.40000000000009px;background:#eeeeee;"></div><div class="r" style="left:414px;top:1303.6000000000004px;width:2517px;height:2.0px;background:#c9c9c9;"></div><div class="r" style="left:414px;top:1304.6000000000004px;width:2517px;height:57.40000000000009px;background:#dfdfdf;"></div><div class="r" style="left:414px;top:1361.0000000000005px;width:2517px;height:2.0px;background:#c9c9c9;"></div><div class="r" style="left:414px;top:1362.0000000000005px;width:2517px;height:57.40000000000009px;background:#eeeeee;"></div><div class="r" style="left:414px;top:1418.4000000000005px;width:2517px;height:2.0px;background:#c9c9c9;"></div><div class="r" style="left:414px;top:1419.4000000000005px;width:2517px;height:57.40000000000009px;background:#dfdfdf;"></div><div class="r" style="left:414px;top:1475.8000000000006px;width:2517px;height:2.0px;background:#c9c9c9;"></div><div class="r" style="left:414px;top:1476.8000000000006px;width:2517px;height:57.40000000000009px;background:#eeeeee;"></div><div class="r" style="left:414px;top:1533.2000000000007px;width:2517px;height:2.0px;background:#c9c9c9;"></div><div class="r" style="left:414px;top:1534.2000000000007px;width:2517px;height:57.40000000000009px;background:#dfdfdf;"></div><div class="r" style="left:414px;top:1590.6000000000008px;width:2517px;height:2.0px;background:#c9c9c9;"></div><div class="r" style="left:414px;top:1591.6000000000008px;width:2517px;height:40.39999999999918px;background:#eeeeee;"></div><div class="r" style="left:414px;top:713.7px;width:2517px;height:74.29999999999995px;background:#fff;"></div><div class="r" style="left:414px;top:713.7px;width:2517px;height:919.3px;border:2px solid #cdcdcd;border-bottom:2.5px solid #b8b8b8;"></div><div class="r" style="left:414px;top:787px;width:2517px;height:2px;background:#cdcdcd;"></div><div class="r" style="left:564.6px;top:713.7px;width:2.0px;height:918.3px;background:#d2d2d2;"></div><div class="r" style="left:855.3px;top:713.7px;width:2.0px;height:918.3px;background:#d2d2d2;"></div><div class="r" style="left:1183.5px;top:713.7px;width:2.0px;height:918.3px;background:#d2d2d2;"></div><div class="r" style="left:1495.8px;top:713.7px;width:2.0px;height:918.3px;background:#d2d2d2;"></div><div class="r" style="left:1892px;top:713.7px;width:2px;height:918.3px;background:#d2d2d2;"></div><div class="r" style="left:2075px;top:713.7px;width:2px;height:918.3px;background:#d2d2d2;"></div><div class="r" style="left:2350px;top:713.7px;width:2px;height:918.3px;background:#d2d2d2;"></div><div class="r" style="left:2703px;top:713.7px;width:2px;height:918.3px;background:#d2d2d2;"></div><div class="r" style="left:452px;top:739.7px;width:25px;height:23.699999999999932px;border:3px solid #5a5a5a;border-radius:3px;"></div><div class="t " style="left:581.2px;top:740.5px;font-size:20.64px;line-height:20.64px;font-weight:400;color:#6b6b6b;transform:scaleX(1.1208);-webkit-text-stroke:0.75px #6b6b6b;">Invoice No.</div><div class="t " style="left:872.8px;top:740.5px;font-size:20.64px;line-height:20.64px;font-weight:400;color:#6b6b6b;transform:scaleX(1.1423);-webkit-text-stroke:0.75px #6b6b6b;">Customer</div><div class="t " style="left:1195.1px;top:740.5px;font-size:20.64px;line-height:20.64px;font-weight:400;color:#6b6b6b;transform:scaleX(1.1250);-webkit-text-stroke:0.75px #6b6b6b;">Invoice Date</div><div class="t " style="left:1508.6px;top:740.5px;font-size:20.64px;line-height:20.64px;font-weight:400;color:#6b6b6b;transform:scaleX(1.1658);-webkit-text-stroke:0.75px #6b6b6b;">Invoice Total</div><div class="t " style="left:1906.0px;top:740.5px;font-size:20.64px;line-height:20.64px;font-weight:400;color:#6b6b6b;transform:scaleX(1.0098);-webkit-text-stroke:0.75px #6b6b6b;">TAX</div><div class="t " style="left:2091.1px;top:740.5px;font-size:20.64px;line-height:20.64px;font-weight:400;color:#6b6b6b;transform:scaleX(1.1390);-webkit-text-stroke:0.75px #6b6b6b;">Balance</div><div class="t " style="left:2361.0px;top:740.5px;font-size:20.64px;line-height:20.64px;font-weight:400;color:#6b6b6b;transform:scaleX(1.1259);-webkit-text-stroke:0.75px #6b6b6b;">Status</div><div class="t " style="left:2718.4px;top:740.5px;font-size:20.64px;line-height:20.64px;font-weight:400;color:#6b6b6b;transform:scaleX(1.1543);-webkit-text-stroke:0.75px #6b6b6b;">Manage</div><div class="r" style="left:452px;top:806px;width:25px;height:24px;border:3px solid #5a5a5a;border-radius:3px;"></div><div class="t " style="left:586.1px;top:806.3px;font-size:20.35px;line-height:20.35px;font-weight:400;color:#1b3a5c;transform:scaleX(0.9861);text-decoration:underline;text-decoration-thickness:1.5px;text-underline-offset:2px;">Fr-00010</div><div class="t " style="left:873.1px;top:806.3px;font-size:20.35px;line-height:20.35px;font-weight:400;color:#222;transform:scaleX(1.0352);">Shahid</div><div class="t " style="left:1196.4px;top:806.3px;font-size:20.35px;line-height:20.35px;font-weight:400;color:#222;transform:scaleX(1.0611);">30-Dec-2025</div><div class="t " style="left:1806.7px;top:806.3px;font-size:20.35px;line-height:20.35px;font-weight:400;color:#222;transform:scaleX(0.9816);">3,000.00</div><div class="t " style="left:2027.7px;top:806.3px;font-size:20.35px;line-height:20.35px;font-weight:400;color:#222;transform:scaleX(1.0023);">0.00</div><div class="t " style="left:2258.3px;top:806.3px;font-size:20.35px;line-height:20.35px;font-weight:400;color:#222;transform:scaleX(0.9653);">2,000.00</div><div class="r" style="left:2433px;top:800.6px;width:195.5px;height:31.399999999999977px;background:#ef8135;border-radius:16px;"></div><div class="t " style="left:2444.2px;top:805.4px;font-size:21.08px;line-height:21.08px;font-weight:400;color:#fff;transform:scaleX(1.0594);-webkit-text-stroke:0.6px #fff;">Receive Payment</div><svg style="left:2758.5px;top:811.8px;" width="22.0" height="6.400000000000091" viewBox="0 0 22.0 6.400000000000091" preserveAspectRatio="none"><circle cx="3.2" cy="3.2" r="2.7" fill="#0d2b4e"/><circle cx="11" cy="3.2" r="2.7" fill="#0d2b4e"/><circle cx="18.8" cy="3.2" r="2.7" fill="#0d2b4e"/></svg><div class="r" style="left:452px;top:863.5px;width:25px;height:24.0px;border:3px solid #5a5a5a;border-radius:3px;"></div><div class="t " style="left:585.9px;top:863.8px;font-size:20.35px;line-height:20.35px;font-weight:400;color:#1b3a5c;transform:scaleX(1.0631);text-decoration:underline;text-decoration-thickness:1.5px;text-underline-offset:2px;">Fr-00009</div><div class="t " style="left:873.5px;top:863.8px;font-size:20.35px;line-height:20.35px;font-weight:400;color:#222;transform:scaleX(1.0351);">Test customer</div><div class="t " style="left:1196.1px;top:863.8px;font-size:20.35px;line-height:20.35px;font-weight:400;color:#222;transform:scaleX(1.0633);">28-Dec-2025</div><div class="t " style="left:1844.8px;top:863.8px;font-size:20.35px;line-height:20.35px;font-weight:400;color:#222;transform:scaleX(1.0023);">0.00</div><div class="t " style="left:2027.7px;top:863.8px;font-size:20.35px;line-height:20.35px;font-weight:400;color:#222;transform:scaleX(1.0023);">0.00</div><div class="t " style="left:2295.6px;top:863.8px;font-size:20.35px;line-height:20.35px;font-weight:400;color:#222;transform:scaleX(0.9892);">0.00</div><div class="r" style="left:2433px;top:858.1px;width:195.5px;height:31.399999999999977px;background:#ef8135;border-radius:16px;"></div><div class="t " style="left:2444.2px;top:862.9px;font-size:21.08px;line-height:21.08px;font-weight:400;color:#fff;transform:scaleX(1.0594);-webkit-text-stroke:0.6px #fff;">Receive Payment</div><svg style="left:2758.5px;top:869.3px;" width="22.0" height="6.400000000000091" viewBox="0 0 22.0 6.400000000000091" preserveAspectRatio="none"><circle cx="3.2" cy="3.2" r="2.7" fill="#0d2b4e"/><circle cx="11" cy="3.2" r="2.7" fill="#0d2b4e"/><circle cx="18.8" cy="3.2" r="2.7" fill="#0d2b4e"/></svg><div class="r" style="left:452px;top:921px;width:25px;height:24px;border:3px solid #8c8c8c;border-radius:3px;"></div><div class="r" style="left:427px;top:903px;width:2493px;height:1797px;background:#fff;border-radius:114px 114px 0 0;box-shadow:0 0 24px rgba(0,0,0,0.10);"></div><svg style="left:482.5px;top:941.5px" width="351.0" height="351.0" viewBox="0 0 350 350"><circle cx="175" cy="175" r="175" fill="#225ea9"/><path d="M27 180 C16 150 20 110 50 78 C70 58 95 40 118 40" stroke="#fff" fill="none" stroke-linecap="round" stroke-linejoin="round" stroke-width="22"/><path d="M117 46 C108 80 100 105 92 130 C80 170 66 220 58 266" stroke="#fff" fill="none" stroke-linecap="round" stroke-linejoin="round" stroke-width="24"/><path d="M82 208 C100 175 130 130 175 90" stroke="#fff" fill="none" stroke-linecap="round" stroke-linejoin="round" stroke-width="21"/><path d="M178 96 C170 130 160 160 155 185 C150 200 146 212 143 222" stroke="#fff" fill="none" stroke-linecap="round" stroke-linejoin="round" stroke-width="21"/><path d="M155 183 C172 160 190 140 215 123" stroke="#fff" fill="none" stroke-linecap="round" stroke-linejoin="round" stroke-width="15"/><path d="M217 128 C214 170 208 220 197 276" stroke="#fff" fill="none" stroke-linecap="round" stroke-linejoin="round" stroke-width="24"/><path d="M215 244 C232 215 252 170 272 135" stroke="#fff" fill="none" stroke-linecap="round" stroke-linejoin="round" stroke-width="18"/><path d="M276 140 C268 200 255 260 228 326" stroke="#fff" fill="none" stroke-linecap="round" stroke-linejoin="round" stroke-width="19"/><path d="M265 258 C290 220 310 180 322 140 C338 148 342 170 330 205 C318 232 300 255 270 257" stroke="#fff" fill="none" stroke-linecap="round" stroke-linejoin="round" stroke-width="16"/></svg><div class="t " style="left:1120.9px;top:1074.6px;font-size:119.19px;line-height:119.19px;font-weight:700;color:#000;transform:scaleX(1.0122);-webkit-text-stroke:2.5px #000;">INVOICE</div><div class="t " style="left:1120.9px;top:1194.2px;font-size:51.75px;line-height:51.75px;font-weight:700;color:#000;transform:scaleX(1.0392);">00015</div><div class="t " style="left:1119.7px;top:1254.7px;font-size:52.33px;line-height:52.33px;font-weight:700;color:#000;transform:scaleX(0.9969);">12-SEP+2025</div><svg style="left:2256.4px;top:1021.4px" width="228" height="228" viewBox="0 0 25 25" shape-rendering="crispEdges"><g fill="#000"><rect x="0" y="0" width="7" height="1.02"/><rect x="8" y="0" width="1" height="1.02"/><rect x="10" y="0" width="1" height="1.02"/><rect x="12" y="0" width="2" height="1.02"/><rect x="15" y="0" width="2" height="1.02"/><rect x="18" y="0" width="7" height="1.02"/><rect x="0" y="1" width="1" height="1.02"/><rect x="6" y="1" width="1" height="1.02"/><rect x="8" y="1" width="2" height="1.02"/><rect x="11" y="1" width="1" height="1.02"/><rect x="13" y="1" width="2" height="1.02"/><rect x="18" y="1" width="1" height="1.02"/><rect x="24" y="1" width="1" height="1.02"/><rect x="0" y="2" width="1" height="1.02"/><rect x="2" y="2" width="3" height="1.02"/><rect x="6" y="2" width="1" height="1.02"/><rect x="8" y="2" width="2" height="1.02"/><rect x="16" y="2" width="1" height="1.02"/><rect x="18" y="2" width="1" height="1.02"/><rect x="20" y="2" width="3" height="1.02"/><rect x="24" y="2" width="1" height="1.02"/><rect x="0" y="3" width="1" height="1.02"/><rect x="2" y="3" width="3" height="1.02"/><rect x="6" y="3" width="1" height="1.02"/><rect x="8" y="3" width="4" height="1.02"/><rect x="15" y="3" width="2" height="1.02"/><rect x="18" y="3" width="1" height="1.02"/><rect x="20" y="3" width="3" height="1.02"/><rect x="24" y="3" width="1" height="1.02"/><rect x="0" y="4" width="1" height="1.02"/><rect x="2" y="4" width="3" height="1.02"/><rect x="6" y="4" width="1" height="1.02"/><rect x="8" y="4" width="2" height="1.02"/><rect x="11" y="4" width="1" height="1.02"/><rect x="13" y="4" width="2" height="1.02"/><rect x="18" y="4" width="1" height="1.02"/><rect x="20" y="4" width="3" height="1.02"/><rect x="24" y="4" width="1" height="1.02"/><rect x="0" y="5" width="1" height="1.02"/><rect x="6" y="5" width="1" height="1.02"/><rect x="9" y="5" width="1" height="1.02"/><rect x="11" y="5" width="1" height="1.02"/><rect x="13" y="5" width="1" height="1.02"/><rect x="15" y="5" width="2" height="1.02"/><rect x="18" y="5" width="1" height="1.02"/><rect x="24" y="5" width="1" height="1.02"/><rect x="0" y="6" width="7" height="1.02"/><rect x="8" y="6" width="1" height="1.02"/><rect x="10" y="6" width="1" height="1.02"/><rect x="12" y="6" width="1" height="1.02"/><rect x="14" y="6" width="1" height="1.02"/><rect x="16" y="6" width="1" height="1.02"/><rect x="18" y="6" width="7" height="1.02"/><rect x="8" y="7" width="1" height="1.02"/><rect x="10" y="7" width="1" height="1.02"/><rect x="12" y="7" width="2" height="1.02"/><rect x="1" y="8" width="2" height="1.02"/><rect x="4" y="8" width="1" height="1.02"/><rect x="6" y="8" width="2" height="1.02"/><rect x="9" y="8" width="1" height="1.02"/><rect x="14" y="8" width="3" height="1.02"/><rect x="18" y="8" width="1" height="1.02"/><rect x="20" y="8" width="5" height="1.02"/><rect x="1" y="9" width="3" height="1.02"/><rect x="7" y="9" width="1" height="1.02"/><rect x="10" y="9" width="4" height="1.02"/><rect x="15" y="9" width="1" height="1.02"/><rect x="24" y="9" width="1" height="1.02"/><rect x="0" y="10" width="1" height="1.02"/><rect x="4" y="10" width="1" height="1.02"/><rect x="6" y="10" width="2" height="1.02"/><rect x="11" y="10" width="1" height="1.02"/><rect x="14" y="10" width="1" height="1.02"/><rect x="18" y="10" width="1" height="1.02"/><rect x="22" y="10" width="1" height="1.02"/><rect x="0" y="11" width="1" height="1.02"/><rect x="2" y="11" width="2" height="1.02"/><rect x="5" y="11" width="1" height="1.02"/><rect x="8" y="11" width="1" height="1.02"/><rect x="10" y="11" width="4" height="1.02"/><rect x="16" y="11" width="1" height="1.02"/><rect x="19" y="11" width="1" height="1.02"/><rect x="21" y="11" width="1" height="1.02"/><rect x="23" y="11" width="1" height="1.02"/><rect x="1" y="12" width="1" height="1.02"/><rect x="3" y="12" width="4" height="1.02"/><rect x="8" y="12" width="2" height="1.02"/><rect x="11" y="12" width="2" height="1.02"/><rect x="14" y="12" width="3" height="1.02"/><rect x="22" y="12" width="1" height="1.02"/><rect x="24" y="12" width="1" height="1.02"/><rect x="1" y="13" width="1" height="1.02"/><rect x="4" y="13" width="2" height="1.02"/><rect x="7" y="13" width="5" height="1.02"/><rect x="13" y="13" width="1" height="1.02"/><rect x="15" y="13" width="2" height="1.02"/><rect x="20" y="13" width="1" height="1.02"/><rect x="22" y="13" width="2" height="1.02"/><rect x="0" y="14" width="1" height="1.02"/><rect x="4" y="14" width="1" height="1.02"/><rect x="6" y="14" width="2" height="1.02"/><rect x="9" y="14" width="2" height="1.02"/><rect x="13" y="14" width="1" height="1.02"/><rect x="16" y="14" width="5" height="1.02"/><rect x="22" y="14" width="2" height="1.02"/><rect x="1" y="15" width="2" height="1.02"/><rect x="5" y="15" width="1" height="1.02"/><rect x="9" y="15" width="2" height="1.02"/><rect x="12" y="15" width="5" height="1.02"/><rect x="21" y="15" width="1" height="1.02"/><rect x="23" y="15" width="1" height="1.02"/><rect x="0" y="16" width="1" height="1.02"/><rect x="2" y="16" width="6" height="1.02"/><rect x="14" y="16" width="7" height="1.02"/><rect x="22" y="16" width="1" height="1.02"/><rect x="8" y="17" width="1" height="1.02"/><rect x="10" y="17" width="1" height="1.02"/><rect x="12" y="17" width="1" height="1.02"/><rect x="16" y="17" width="1" height="1.02"/><rect x="20" y="17" width="1" height="1.02"/><rect x="22" y="17" width="2" height="1.02"/><rect x="0" y="18" width="7" height="1.02"/><rect x="8" y="18" width="2" height="1.02"/><rect x="11" y="18" width="2" height="1.02"/><rect x="14" y="18" width="1" height="1.02"/><rect x="16" y="18" width="1" height="1.02"/><rect x="18" y="18" width="1" height="1.02"/><rect x="20" y="18" width="1" height="1.02"/><rect x="22" y="18" width="1" height="1.02"/><rect x="24" y="18" width="1" height="1.02"/><rect x="0" y="19" width="1" height="1.02"/><rect x="6" y="19" width="1" height="1.02"/><rect x="9" y="19" width="5" height="1.02"/><rect x="15" y="19" width="2" height="1.02"/><rect x="20" y="19" width="5" height="1.02"/><rect x="0" y="20" width="1" height="1.02"/><rect x="2" y="20" width="3" height="1.02"/><rect x="6" y="20" width="1" height="1.02"/><rect x="8" y="20" width="2" height="1.02"/><rect x="13" y="20" width="2" height="1.02"/><rect x="16" y="20" width="6" height="1.02"/><rect x="23" y="20" width="1" height="1.02"/><rect x="0" y="21" width="1" height="1.02"/><rect x="2" y="21" width="3" height="1.02"/><rect x="6" y="21" width="1" height="1.02"/><rect x="9" y="21" width="3" height="1.02"/><rect x="14" y="21" width="1" height="1.02"/><rect x="17" y="21" width="3" height="1.02"/><rect x="21" y="21" width="1" height="1.02"/><rect x="23" y="21" width="1" height="1.02"/><rect x="0" y="22" width="1" height="1.02"/><rect x="2" y="22" width="3" height="1.02"/><rect x="6" y="22" width="1" height="1.02"/><rect x="8" y="22" width="2" height="1.02"/><rect x="14" y="22" width="1" height="1.02"/><rect x="16" y="22" width="3" height="1.02"/><rect x="20" y="22" width="3" height="1.02"/><rect x="24" y="22" width="1" height="1.02"/><rect x="0" y="23" width="1" height="1.02"/><rect x="6" y="23" width="1" height="1.02"/><rect x="8" y="23" width="2" height="1.02"/><rect x="11" y="23" width="1" height="1.02"/><rect x="15" y="23" width="1" height="1.02"/><rect x="19" y="23" width="3" height="1.02"/><rect x="23" y="23" width="2" height="1.02"/><rect x="0" y="24" width="7" height="1.02"/><rect x="9" y="24" width="1" height="1.02"/><rect x="11" y="24" width="3" height="1.02"/><rect x="16" y="24" width="1" height="1.02"/><rect x="18" y="24" width="2" height="1.02"/><rect x="21" y="24" width="1" height="1.02"/><rect x="24" y="24" width="1" height="1.02"/></g></svg><svg style="left:2580px;top:995px;" width="240" height="110" viewBox="0 0 240 110" preserveAspectRatio="none"><path d="M10.6 60.4 Q116 0 221.2 61.6 Q116 14 10.6 60.4 Z" fill="#138a12" stroke="#0a3d0a" stroke-width="0.5"/><g fill="#0546a8" stroke="#132a55" stroke-width="0.6" fill-rule="evenodd"><path d="M36.4 98 V63 Q36.4 53.4 46 53.4 H81 V61.6 H47.5 V71.6 H81 V78.6 H47.5 V98 Z"/><path d="M87.4 53.4 H127 Q139 53.4 139 65.5 Q139 72 133 75 Q139.5 78.5 139.5 86 Q139.5 98 126 98 H87.4 Z M98 61.6 V69.2 H124.5 Q128.5 69.2 128.5 65.4 Q128.5 61.6 124.5 61.6 Z M98 81 V89 H125 Q129 89 129 85 Q129 81 125 81 Z"/><path d="M145.5 98 V53.4 H181 Q195 53.4 195 66.5 Q195 77 185.5 79.5 L195.4 98 H181.5 L172.5 80.5 H156 V98 Z M156 61.6 V72.2 H178.5 Q184 72.2 184 66.9 Q184 61.6 178.5 61.6 Z"/></g><path d="M105.6 27 L126.8 47 M127.3 26.4 L104.5 48.1" stroke="#3a3000" stroke-width="1.1"/><path d="M115.6 8.8 L117.6 33.8 L150.2 35.8 L117.6 37.8 L115.6 66.9 L113.6 37.8 L81 35.8 L113.6 33.8 Z" fill="#f7d000" stroke="#6b5a00" stroke-width="0.4"/><circle cx="115.6" cy="35.8" r="4.5" fill="#ffc400"/></svg><div class="r" style="left:2560px;top:1107px;width:278.4000000000001px;height:165px;background:#0546a8;border-radius:7px;box-shadow:1px 1px 1px rgba(0,0,0,0.4);"></div><div class="t " style="left:2578.4px;top:1119.9px;font-size:107.56px;line-height:107.56px;font-weight:700;color:#fff;transform:scaleX(0.5697);-webkit-text-stroke:5px #fff;">DIGITAL</div><div class="t " style="left:2576.4px;top:1228.0px;font-size:29.07px;line-height:29.07px;font-weight:400;color:#fff;transform:scaleX(0.8682);">INVOICING SYSTEM</div><div class="r" style="left:466.7px;top:1352px;width:1179.1px;height:126.59999999999991px;background:#043255;border-radius:10px;"></div><div class="r" style="left:1696.6px;top:1352px;width:1176.1px;height:127.40000000000009px;background:#043255;border-radius:10px;"></div><div class="t " style="left:506.6px;top:1385.4px;font-size:58.14px;line-height:58.14px;font-weight:700;color:#fff;transform:scaleX(0.9432);">FROM</div><div class="t " style="left:1769.8px;top:1384.5px;font-size:59.59px;line-height:59.59px;font-weight:700;color:#fff;transform:scaleX(0.9472);">TO</div><div class="t " style="left:526.0px;top:1594.9px;font-size:44.48px;line-height:44.48px;font-weight:400;color:#000;transform:scaleX(0.9425);">Pakistan</div><div class="t " style="left:528.5px;top:1642.3px;font-size:44.48px;line-height:44.48px;font-weight:400;color:#000;transform:scaleX(0.9049);">TAX # : 0862809</div><div class="t " style="left:527.6px;top:1690.1px;font-size:44.48px;line-height:44.48px;font-weight:400;color:#000;transform:scaleX(0.8933);">STN # : 05-01-5109-001-19</div><div class="t " style="left:1773.3px;top:1548.0px;font-size:45.06px;line-height:45.06px;font-weight:400;color:#000;transform:scaleX(0.9333);">Pakistan</div><div class="t " style="left:1773.5px;top:1621.1px;font-size:45.06px;line-height:45.06px;font-weight:400;color:#000;transform:scaleX(0.8745);">Nazeer &amp; Sons, TB Hospital Road, Near Floor Mill</div><div class="t " style="left:1773.4px;top:1668.2px;font-size:45.06px;line-height:45.06px;font-weight:400;color:#000;transform:scaleX(0.8888);">Multan</div><div class="t " style="left:1773.4px;top:1765.4px;font-size:45.06px;line-height:45.06px;font-weight:400;color:#000;transform:scaleX(0.8929);">Punjab</div><div class="r" style="left:478.8px;top:1874.2px;width:2387.8999999999996px;height:587.8px;background:#fff;border:3px solid #e4e4e6;border-radius:12px;box-shadow:0 6px 10px rgba(0,0,0,0.10);"></div><div class="r" style="left:481.8px;top:1877.2px;width:2381.8999999999996px;height:107.29999999999995px;background:#f7f7f9;border-radius:10px 10px 0 0;"></div><div class="r" style="left:481.8px;top:1984px;width:2381.8999999999996px;height:6px;background:#dfe2e7;"></div><div class="r" style="left:637.5px;top:2088.3px;width:2226.2px;height:85.0px;background:#e9eaed;"></div><div class="r" style="left:637.5px;top:2087px;width:2226.2px;height:5px;background:#dfe2e6;"></div><div class="r" style="left:637.5px;top:2295.4px;width:2226.2px;height:84.59999999999991px;background:#e9eaed;"></div><div class="r" style="left:637.5px;top:2294px;width:2226.2px;height:5px;background:#dfe2e6;"></div><div class="t " style="left:496.9px;top:1907.5px;font-size:45.06px;line-height:45.06px;font-weight:400;color:#474f58;transform:scaleX(0.8998);">Sr No</div><div class="t " style="left:651.2px;top:1907.5px;font-size:45.06px;line-height:45.06px;font-weight:400;color:#474f58;transform:scaleX(0.9371);">Description</div><div class="t " style="left:1271.0px;top:1907.5px;font-size:45.06px;line-height:45.06px;font-weight:400;color:#474f58;transform:scaleX(0.8186);">HS Code</div><div class="t " style="left:1672.7px;top:1907.5px;font-size:45.06px;line-height:45.06px;font-weight:400;color:#474f58;transform:scaleX(0.9535);">UOM</div><div class="t " style="left:2036.8px;top:1907.5px;font-size:45.06px;line-height:45.06px;font-weight:400;color:#474f58;transform:scaleX(0.9307);">Qty</div><div class="t " style="left:2288.3px;top:1907.5px;font-size:45.06px;line-height:45.06px;font-weight:400;color:#474f58;transform:scaleX(0.9213);">Unit Price</div><div class="t " style="left:2577.3px;top:1907.5px;font-size:45.06px;line-height:45.06px;font-weight:400;color:#474f58;transform:scaleX(0.8564);">AccountName</div><div class="t " style="left:651.4px;top:2016.4px;font-size:43.61px;line-height:43.61px;font-weight:400;color:#111;transform:scaleX(0.9363);">BLENDED YARN</div><div class="t " style="left:1250.8px;top:2016.4px;font-size:43.61px;line-height:43.61px;font-weight:400;color:#111;transform:scaleX(0.9340);">5509.1200</div><div class="t " style="left:1690.5px;top:2015.9px;font-size:43.61px;line-height:43.61px;font-weight:400;color:#111;transform:scaleX(0.9882);">KG</div><div class="t " style="left:2006.8px;top:2016.4px;font-size:43.61px;line-height:43.61px;font-weight:400;color:#111;transform:scaleX(0.9370);">280.33</div><div class="t " style="left:2364.6px;top:2011.3px;font-size:43.61px;line-height:43.61px;font-weight:400;color:#111;transform:scaleX(1.0409);">860. 00</div><div class="t " style="left:2647.5px;top:2015.6px;font-size:43.61px;line-height:43.61px;font-weight:400;color:#111;transform:scaleX(0.9069);">Sales</div><div class="t " style="left:814.3px;top:2113.2px;font-size:39.97px;line-height:39.97px;font-weight:400;color:#4b535b;transform:scaleX(0.9494);">Sale Type</div><div class="t " style="left:1225.9px;top:2113.2px;font-size:39.97px;line-height:39.97px;font-weight:400;color:#4b535b;transform:scaleX(0.9584);">Fbr Sale Rate</div><div class="t " style="left:1617.7px;top:2113.2px;font-size:39.97px;line-height:39.97px;font-weight:400;color:#4b535b;transform:scaleX(1.0096);">Further Tax</div><div class="t " style="left:1942.0px;top:2113.2px;font-size:39.97px;line-height:39.97px;font-weight:400;color:#4b535b;transform:scaleX(0.9507);">SRO Schedule</div><div class="t " style="left:2462.7px;top:2113.2px;font-size:39.97px;line-height:39.97px;font-weight:400;color:#4b535b;transform:scaleX(0.9448);">SRO Item</div><div class="t " style="left:815.8px;top:2319.2px;font-size:39.97px;line-height:39.97px;font-weight:400;color:#4b535b;transform:scaleX(0.9774);">Extra Tax</div><div class="t " style="left:1236.0px;top:2319.2px;font-size:39.97px;line-height:39.97px;font-weight:400;color:#4b535b;transform:scaleX(0.9148);">FED Payable</div><div class="t " style="left:1624.5px;top:2319.2px;font-size:39.97px;line-height:39.97px;font-weight:400;color:#4b535b;transform:scaleX(0.9977);">Before Tax</div><div class="t " style="left:1990.1px;top:2319.2px;font-size:39.97px;line-height:39.97px;font-weight:400;color:#4b535b;transform:scaleX(0.9891);">Total Tax</div><div class="t " style="left:2467.6px;top:2319.2px;font-size:39.97px;line-height:39.97px;font-weight:400;color:#4b535b;transform:scaleX(0.9688);">After Tax</div><div class="t " style="left:713.7px;top:2193.3px;font-size:39.24px;line-height:39.24px;font-weight:400;color:#111;transform:scaleX(0.9240);">Goods at standard rate</div><div class="t " style="left:831.7px;top:2233.8px;font-size:39.24px;line-height:39.24px;font-weight:400;color:#111;transform:scaleX(0.9275);">(default)</div><div class="t " style="left:1193.3px;top:2213.8px;font-size:39.24px;line-height:39.24px;font-weight:400;color:#111;transform:scaleX(0.9201);">18% - 43,395.0840</div><div class="t " style="left:1587.7px;top:2212.5px;font-size:39.24px;line-height:39.24px;font-weight:400;color:#111;transform:scaleX(0.9229);">4.00% - 9,643.3520</div><div class="t " style="left:1609.2px;top:2398.8px;font-size:39.24px;line-height:39.24px;font-weight:400;color:#111;transform:scaleX(0.9312);">241,083.8000</div><div class="t " style="left:1967.5px;top:2398.8px;font-size:39.24px;line-height:39.24px;font-weight:400;color:#111;transform:scaleX(0.9273);">53,038.4360</div><div class="t " style="left:2431.2px;top:2398.8px;font-size:39.24px;line-height:39.24px;font-weight:400;color:#111;transform:scaleX(0.9342);">294,122.2360</div><div class="t " style="left:496.8px;top:2204.3px;font-size:42.15px;line-height:42.15px;font-weight:400;color:#111;">1</div><div class="r" style="left:2062.5px;top:2237px;width:9.0px;height:2.5px;background:#222;"></div><div class="r" style="left:2540.5px;top:2237px;width:9.0px;height:2.5px;background:#222;"></div><div class="r" style="left:893.5px;top:2425px;width:9.0px;height:2.5px;background:#222;"></div><div class="r" style="left:1341.5px;top:2425px;width:9.0px;height:2.5px;background:#222;"></div>
</body></html>
